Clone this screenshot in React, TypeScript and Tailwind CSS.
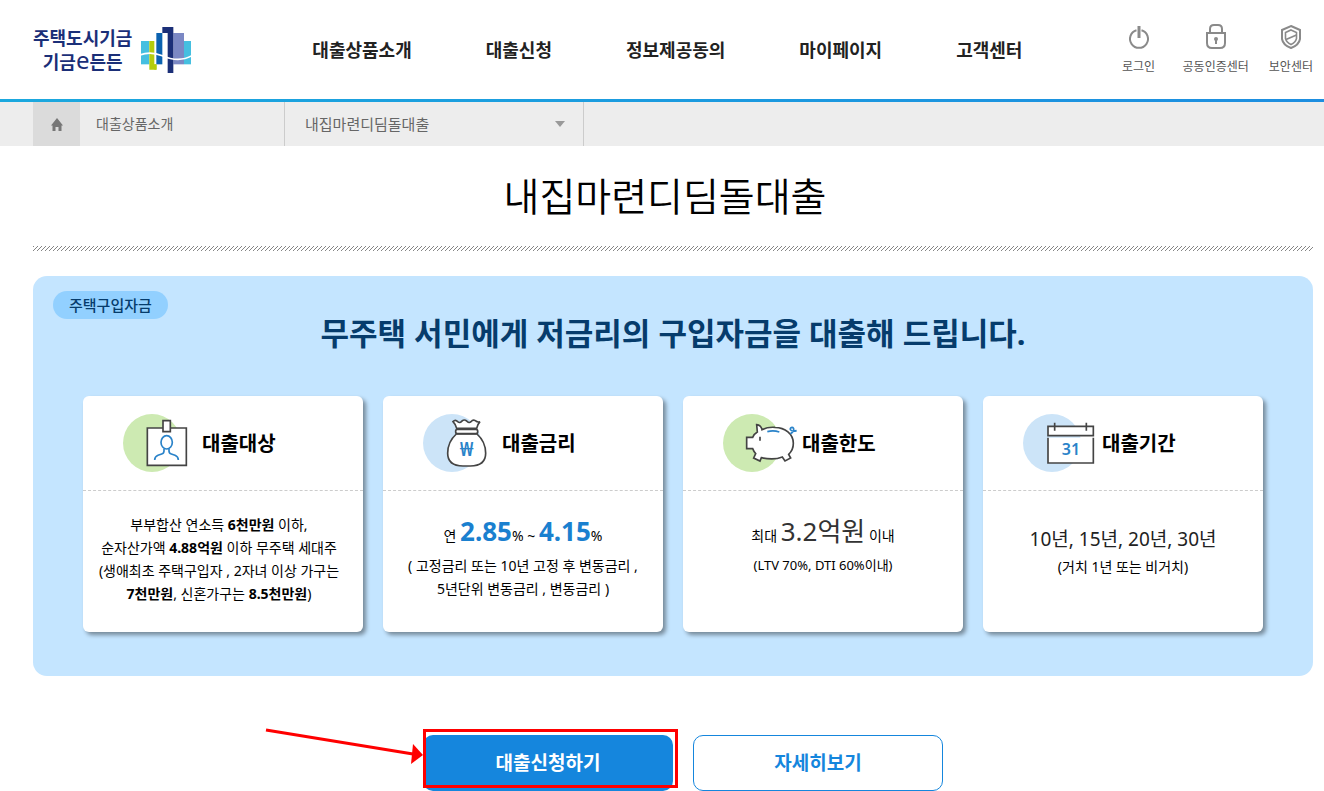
import React from "react";

const NAV_ITEMS = ["대출상품소개", "대출신청", "정보제공동의", "마이페이지", "고객센터"];

const Logo: React.FC = () => (
    <a href="#" className="flex items-center gap-2 text-[#1b2f78]">
        <span className="flex flex-col items-center text-lg leading-6 font-bold whitespace-nowrap">
            <span>주택도시기금</span>
            <span className="flex items-baseline">
                기금<span className="text-2xl leading-5 font-normal">e</span>든든
            </span>
        </span>
        <svg viewBox="363 45 156 144" className="h-12 w-[52px]" aria-hidden="true">
            <path d="M366 90h25v70h-25z" fill="#45bfe0" />
            <path d="M391 90h15v70h6v16h-21z" fill="#b4cc0b" />
            <path d="M406 160h7v16h-7z" fill="#b4cc0b" />
            <path d="M412 66h18v94h-18z" fill="#0b62b0" />
            <path d="M463 66h32v94h-32z" fill="#7b88c4" />
            <path d="M495 90h21v70h-21z" fill="#45bfe0" />
            <path d="M430 48h33v138h-17V66h-16z" fill="#1b2f78" />
            <path
                d="M363 132C385 123 405 124 430 134C450 143 485 153 519 134"
                fill="none"
                stroke="#fff"
                strokeWidth="5"
            />
        </svg>
    </a>
);

const PowerIcon: React.FC = () => (
    <svg viewBox="0 0 24 28" className="h-7 w-6" fill="none" stroke="#8a8a8a" strokeWidth="2">
        <path d="M9.500 7.200A9 9 0 1 0 14.500 7.200" />
        <path d="M12 3v12" strokeWidth="3" />
    </svg>
);

const LockIcon: React.FC = () => (
    <svg viewBox="0 0 24 28" className="h-7 w-6" fill="none" stroke="#8a8a8a" strokeWidth="2">
        <path d="M3 10h18v10q0 5-5 5H8q-5 0-5-5z" />
        <path d="M6 10V6q0-4 4-4h4q4 0 4 4v4" />
        <circle cx="12" cy="16" r="2" fill="#8a8a8a" stroke="none" />
        <path d="M12 16v5" />
    </svg>
);

const ShieldIcon: React.FC = () => (
    <svg viewBox="0 0 24 28" className="h-7 w-6" fill="none" stroke="#8a8a8a">
        <path d="M12 3L21 7v9q-1 6-9 9q-8-3-9-9V7z" strokeWidth="2" />
        <path d="M12 7L17.500 9.500v6q-1 4-5.500 6q-4.500-2-5.500-6v-6z" strokeWidth="1.600" />
        <path d="M7 16.500l10.500-4.500" strokeWidth="1.800" />
    </svg>
);

const UTILS = [
    { label: "로그인", icon: <PowerIcon /> },
    { label: "공동인증센터", icon: <LockIcon /> },
    { label: "보안센터", icon: <ShieldIcon /> },
];

const Header: React.FC = () => (
    <header>
        <div className="flex h-[99px] items-center pr-[11px] pl-[33px]">
            <Logo />
            <nav className="ml-[120px] flex gap-[74px] text-lg font-bold whitespace-nowrap text-[#222]">
                {NAV_ITEMS.map((item) => (
                    <a key={item} href="#">
                        {item}
                    </a>
                ))}
            </nav>
            <div className="ml-auto flex gap-5 text-xs leading-5 whitespace-nowrap text-[#555]">
                {UTILS.map(({ label, icon }) => (
                    <a key={label} href="#" className="flex min-w-12 flex-col items-center gap-[6px] last:min-w-11">
                        {icon}
                        {label}
                    </a>
                ))}
            </div>
        </div>
        <div className="h-[3px] bg-linear-to-r from-[#1ba8de] to-[#1d8ee0]" />
    </header>
);

const Breadcrumb: React.FC = () => (
    <div className="flex h-11 items-stretch bg-[#ededed] pl-[33px] text-[#666]">
        <a href="#" aria-label="홈" className="flex w-[47px] items-center justify-center bg-[#dbdbdb]">
            <svg viewBox="0 0 12 13" className="h-[13px] w-3" fill="#777">
                <path d="M6 0L12 7.500h-1.500V13H7.500V9h-3v4H1.500V7.500H0z" />
            </svg>
        </a>
        <a href="#" className="flex w-[204px] items-center pl-4 text-sm">
            대출상품소개
        </a>
        <div className="relative w-[300px] border-x border-[#ccc]">
            <select
                aria-label="대출 상품"
                className="h-full w-full appearance-none bg-transparent pl-5 text-[15px] outline-none"
            >
                <option>내집마련디딤돌대출</option>
            </select>
            <svg viewBox="0 0 10 6" className="pointer-events-none absolute top-[19px] right-[18px] h-[6px] w-[10px]" fill="#999">
                <path d="M0 0h10L5 6z" />
            </svg>
        </div>
    </div>
);

// hatched rule under the page title
const HatchedRule: React.FC = () => (
    <svg className="mb-[25px] block h-[5px] w-full" aria-hidden="true">
        <pattern id="hatch" width="4" height="5" patternUnits="userSpaceOnUse">
            <path d="M-4 5L1 0M0 5L5 0M4 5L9 0" stroke="#777" strokeWidth="0.900" />
        </pattern>
        <rect width="100%" height="5" fill="url(#hatch)" />
    </svg>
);

const GREEN = "#cdeab2";
const BLUE = "#cce4f8";

interface CardIconProps {
    color: string;
    children: React.ReactNode;
}

const CardIcon: React.FC<CardIconProps> = ({ color, children }) => (
    <svg viewBox="129 72 228 174" className="h-[58px] w-[76px]" fill="none" stroke="#444" strokeWidth="5" aria-hidden="true">
        <circle cx="216" cy="159" r="87" fill={color} stroke="none" />
        {children}
    </svg>
);

const PersonIcon = (
    <CardIcon color={GREEN}>
        <path d="M202 114h117v112H202z" fill="#fff" />
        <path d="M249 92h22v33h-22z" fill="#fff" />
        <g stroke="#2a83c9">
            <ellipse cx="260" cy="157" rx="17" ry="20" />
            <path d="M252 176v7q0 7-7 9l-11 4q-10 4-10 14M267 176v7q0 7 7 9l11 4q10 4 10 14" />
        </g>
    </CardIcon>
);

const MoneyBagIcon = (
    <CardIcon color={BLUE}>
        <path
            d="M230 115Q227 103 219 95Q226 87 233 95Q240 101 246 93Q253 87 260 93Q267 101 273 95Q279 87 286 92Q293 98 300 95Q292 104 290 115z"
            fill="#fff"
        />
        <path
            d="M229 132C211 148 203 168 203 190C203 216 220 228 249 228H271C300 228 317 216 317 190C317 168 309 148 291 132z"
            fill="#fff"
        />
        <rect x="227" y="118" width="66" height="13" rx="5" fill="#fff" />
        <text
            x="260"
            y="199"
            textAnchor="middle"
            fontSize="58"
            fontWeight="600"
            fill="#2a83c9"
            stroke="none"
            className="font-['Noto_Sans',sans-serif]"
        >
            ₩
        </text>
    </CardIcon>
);

const PiggyIcon = (
    <CardIcon color={GREEN}>
        <path
            d="M246 119C258 113 272 111 285 112C315 113 340 132 340 160C340 174 335 185 326 193L332 204L315 213L307 201C290 208 262 207 244 203L240 213L221 204L227 191C222 186 220 181 218 176H200V142H218C221 135 225 130 232 126L230 104C239 105 244 110 246 119z"
            fill="#fff"
        />
        <path d="M240 140v12" />
        <g stroke="#2a83c9">
            <path d="M262 125Q280 120 298 126" />
            <path d="M331 131C343 126 344 112 336 112C326 113 330 128 350 122" />
        </g>
    </CardIcon>
);

const CalendarIcon = (
    <CardIcon color={BLUE}>
        <path d="M204 109h136v28H204z" fill="#fff" />
        <path d="M204 143h136v76H204z" fill="#fff" stroke="none" />
        <path d="M204 143v76h136v-76M224 98v24M319 98v24" />
        <text
            x="273"
            y="196"
            textAnchor="middle"
            fontSize="48"
            fontWeight="600"
            fill="#2a83c9"
            stroke="none"
            className="font-['Noto_Sans',sans-serif]"
        >
            31
        </text>
    </CardIcon>
);

interface LoanCardProps {
    icon: React.ReactNode;
    title: string;
    children: React.ReactNode;
}

const LoanCard: React.FC<LoanCardProps> = ({ icon, title, children }) => (
    <article className="h-[236px] rounded-md bg-white shadow-[3px_3px_4px_rgba(0,0,0,0.4)]">
        <div className="flex h-[95px] items-center gap-[3px] border-b border-dashed border-[#ccc] pl-10">
            {icon}
            <h3 className="pt-[2px] text-[20px] font-bold">{title}</h3>
        </div>
        <div className="pt-[22px] text-center text-sm leading-[23px] whitespace-nowrap">{children}</div>
    </article>
);

const Highlights: React.FC = () => (
    <section className="relative h-[400px] rounded-[14px] bg-[#c4e5ff] px-[50px] pt-9">
        <span className="absolute top-[15px] left-5 flex h-7 items-center rounded-full bg-[#92d0ff] px-4 text-[15px] font-medium text-[#063c6c]">
            주택구입자금
        </span>
        <h2 className="text-center text-[31px] leading-[42px] font-bold text-[#063c6c]">
            무주택 서민에게 저금리의 구입자금을 대출해 드립니다.
        </h2>
        <div className="mt-[42px] grid grid-cols-4 gap-5">
            <LoanCard icon={PersonIcon} title="대출대상">
                <div className="pr-2">
                    <p>
                        부부합산 연소득 <b>6천만원</b> 이하,
                    </p>
                    <p>
                        순자산가액 <b>4.88억원</b> 이하 무주택 세대주
                    </p>
                    <p>(생애최초 주택구입자 , 2자녀 이상 가구는</p>
                    <p>
                        <b>7천만원</b>, 신혼가구는 <b>8.5천만원</b>)
                    </p>
                </div>
            </LoanCard>
            <LoanCard icon={MoneyBagIcon} title="대출금리">
                <p className="leading-9">
                    연 <b className="text-[26px] text-[#1a80cf]">2.85</b>% ~{" "}
                    <b className="text-[26px] text-[#1a80cf]">4.15</b>%
                </p>
                <p>( 고정금리 또는 10년 고정 후 변동금리 ,</p>
                <p>5년단위 변동금리 , 변동금리 )</p>
            </LoanCard>
            <LoanCard icon={PiggyIcon} title="대출한도">
                <p className="leading-9">
                    최대 <span className="text-[26px] text-[#333]">3.2억원</span> 이내
                </p>
                <p className="text-[13px]">(LTV 70%, DTI 60%이내)</p>
            </LoanCard>
            <LoanCard icon={CalendarIcon} title="대출기간">
                <p className="pt-[10px] text-[19px] leading-8 text-[#222]">10년, 15년, 20년, 30년</p>
                <p>(거치 1년 또는 비거치)</p>
            </LoanCard>
        </div>
    </section>
);

const Actions: React.FC = () => (
    <div className="mt-[59px] flex justify-center gap-5 pl-5 text-[19px] font-bold">
        <div className="relative">
            <button type="button" className="h-14 w-[250px] rounded-[10px] bg-[#1586dd] text-white">
                대출신청하기
            </button>
            {/* callout around the apply button */}
            <div className="pointer-events-none absolute -top-[6px] left-0 h-[59px] w-[255px] border-3 border-[#f00]" />
            <svg
                viewBox="0 0 158 40"
                className="pointer-events-none absolute -top-2 right-full h-10 w-[158px]"
                aria-hidden="true"
            >
                <path d="M1 3L148 27" stroke="#f00" strokeWidth="3" />
                <path d="M158 28L148 17L146 37z" fill="#f00" />
            </svg>
        </div>
        <button
            type="button"
            className="h-14 w-[250px] rounded-[10px] border border-[#1586dd] bg-white text-[#1586dd]"
        >
            자세히보기
        </button>
    </div>
);

export default function App() {
    return (
        <div className="bg-white font-['Noto_Sans','Noto_Sans_CJK_KR',sans-serif] text-black">
            <Header />
            <Breadcrumb />
            <main className="pr-[11px] pl-[33px]">
                <h1 className="flex h-[100px] items-center justify-center pr-4 text-[39px] font-[350]">
                    내집마련디딤돌대출
                </h1>
                <HatchedRule />
                <Highlights />
                <Actions />
            </main>
        </div>
    );
}
